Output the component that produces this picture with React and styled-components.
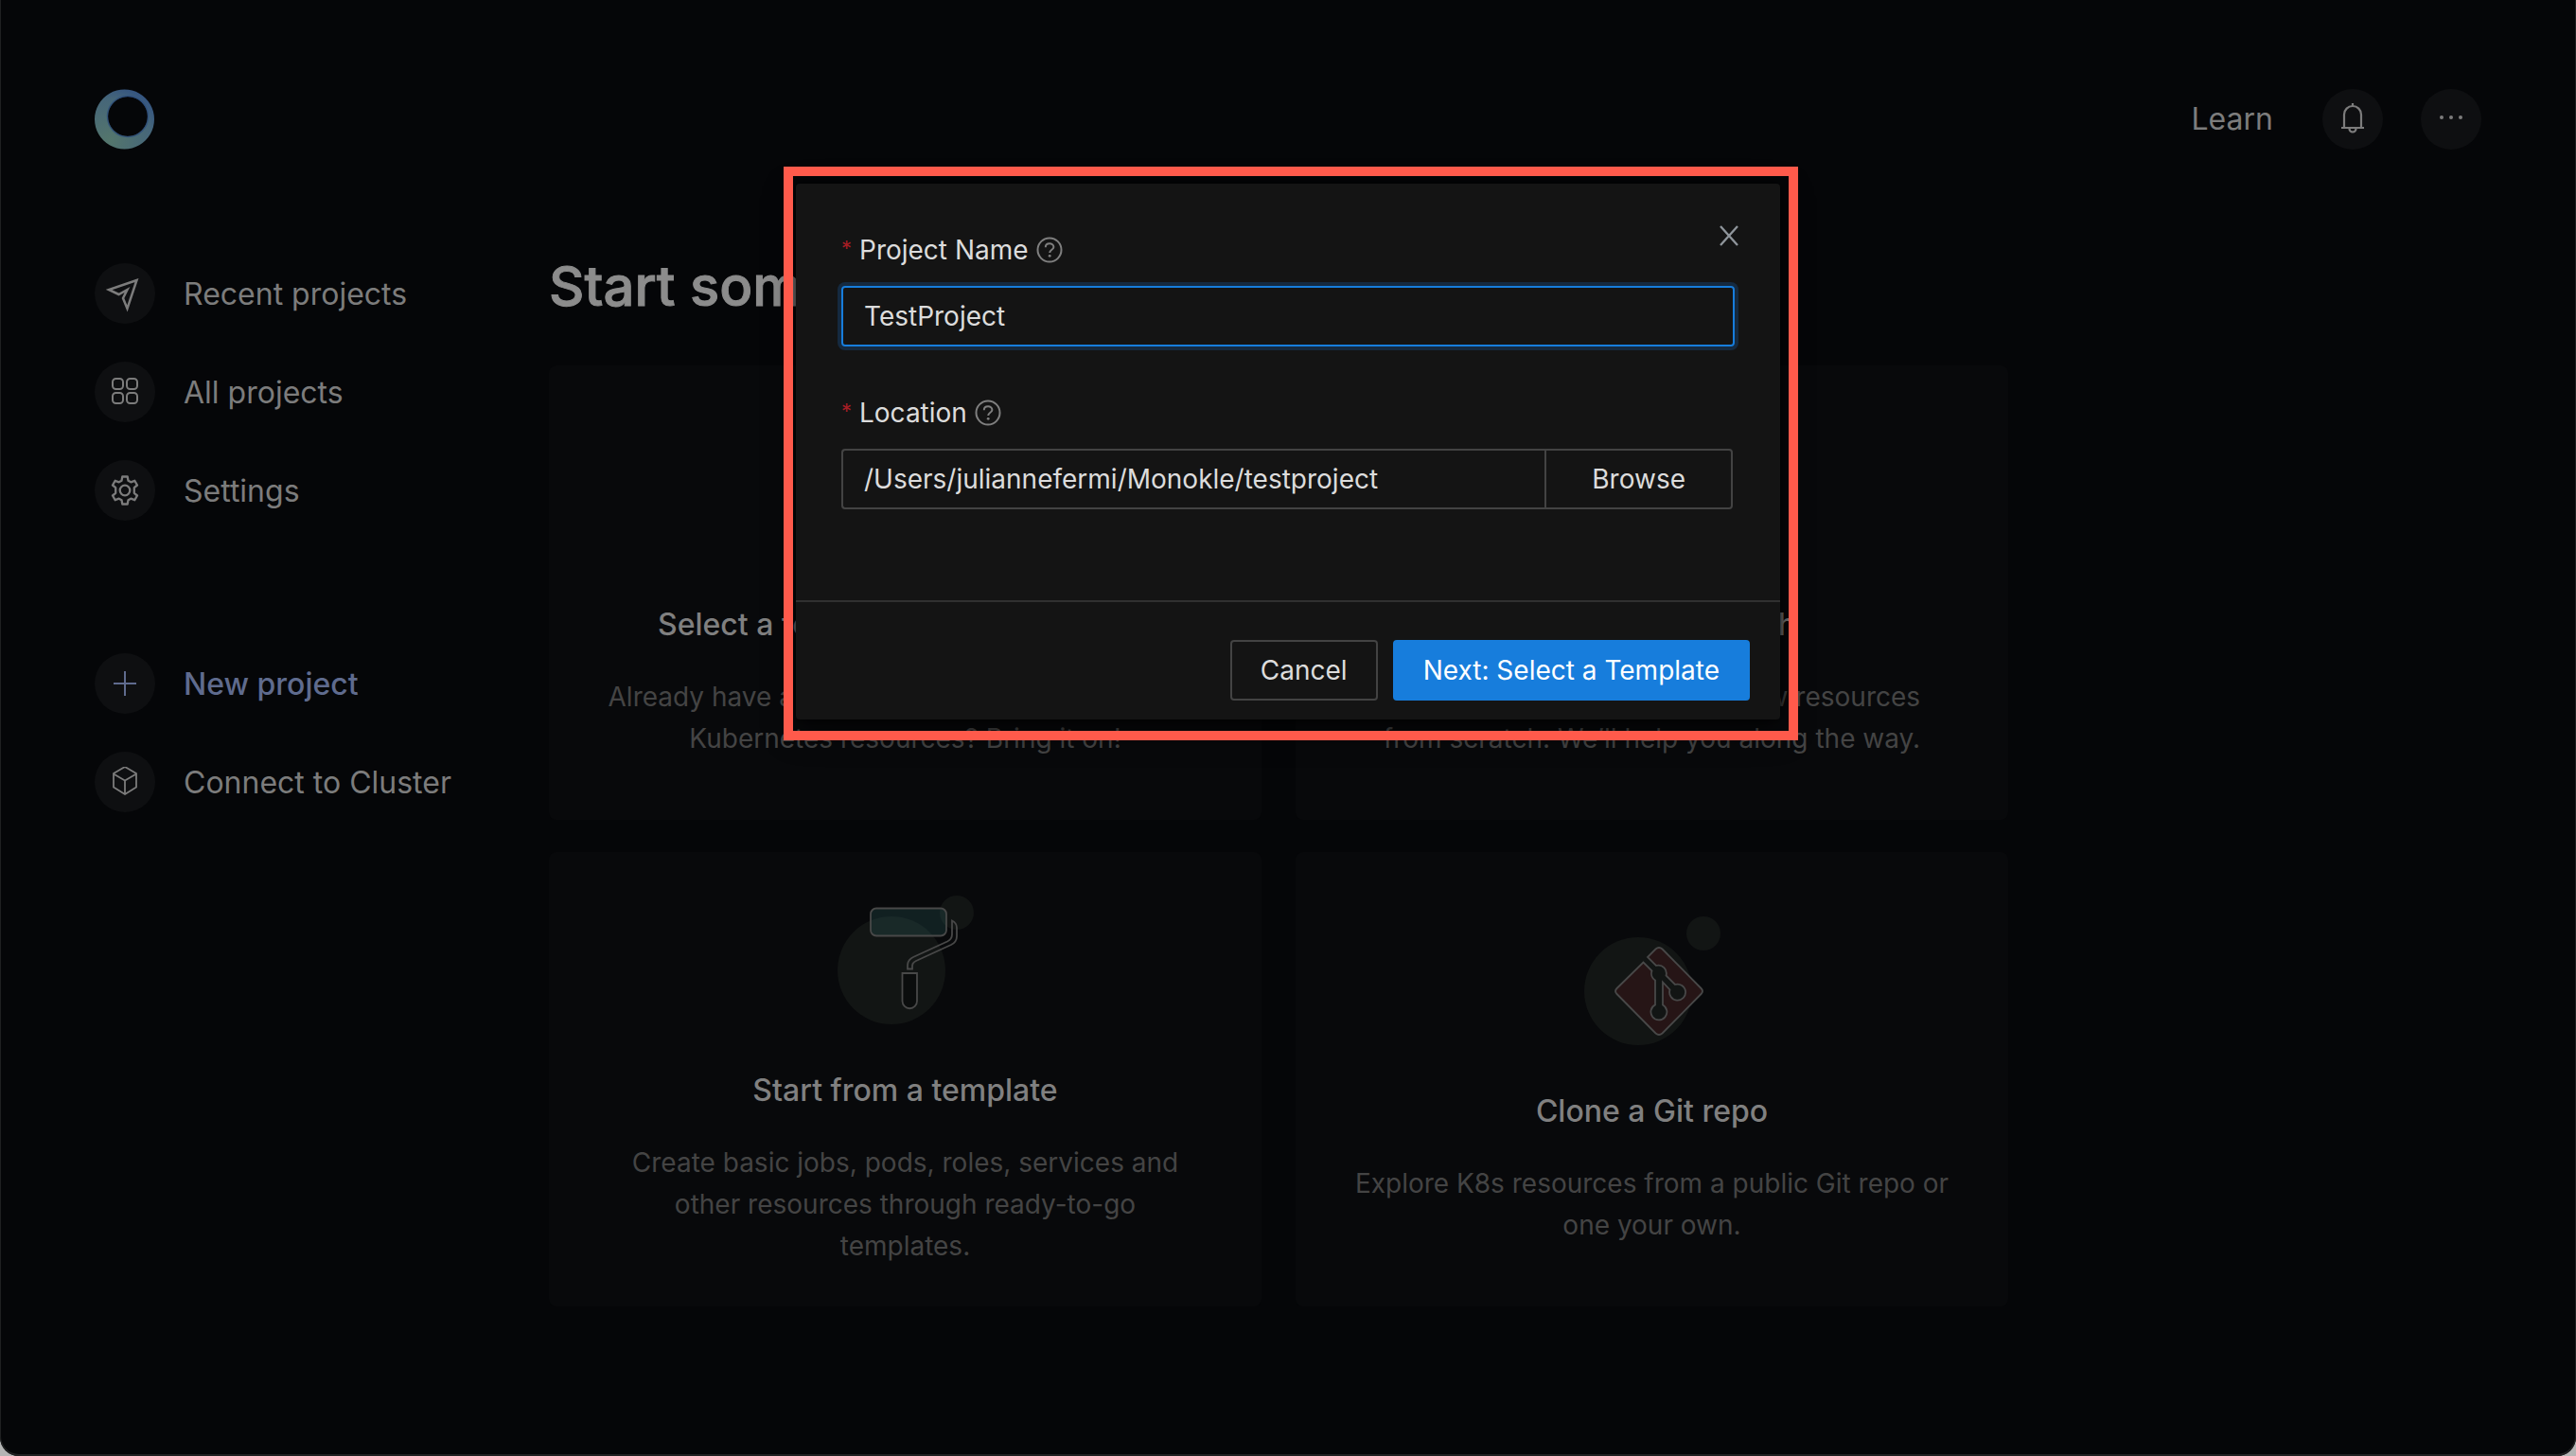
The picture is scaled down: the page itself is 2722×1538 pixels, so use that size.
import React from 'react';
import styled, { createGlobalStyle } from 'styled-components';

const GlobalStyle = createGlobalStyle`
  * { box-sizing: border-box; }
  html, body, #root { height: 100%; }
  body { margin: 0; background: #b4b4b4; }
  body, button, input { font-family: Inter, "Liberation Sans", sans-serif; }
`;

const Window = styled.div`
  position: relative;
  min-height: 100%;
  padding: 94px 100px 0;
  overflow: hidden;
  border-radius: 0 0 20px 20px;
  background: #050608;
  box-shadow: inset 0 -1px 0 1px #1f2021;
  color: #7c7c7c;
`;

const Header = styled.header`
  display: flex;
  align-items: center;
  justify-content: space-between;
  height: 64px;
`;

const HeaderActions = styled.div`
  display: flex;
  align-items: center;
  gap: 52px;
`;

const LearnLink = styled.a`
  font-size: 32px;
  line-height: 48px;
  color: #7c7c7c;
  text-decoration: none;
`;

const RoundButtons = styled.div`
  display: flex;
  gap: 40px;
`;

const RoundButton = styled.button`
  display: flex;
  align-items: center;
  justify-content: center;
  width: 64px;
  height: 64px;
  padding: 0;
  border: 0;
  border-radius: 50%;
  background: #0e0f11;
  color: #7c7c7c;
`;

const Body = styled.div`
  display: flex;
  padding-top: 108px;
`;

const Sidebar = styled.nav`
  display: flex;
  flex: 0 0 480px;
  flex-direction: column;
  gap: 140px;
  padding-top: 12px;
`;

const NavGroup = styled.div`
  display: flex;
  flex-direction: column;
  align-items: flex-start;
  gap: 40px;
`;

const NavItem = styled.a`
  display: flex;
  align-items: center;
  gap: 30px;
  height: 64px;
  font-size: 32px;
  font-weight: ${p => (p.$active ? 500 : 400)};
  color: ${p => (p.$active ? '#5f6b8e' : '#7c7c7c')};
  text-decoration: none;
`;

const NavIcon = styled.span`
  display: flex;
  align-items: center;
  justify-content: center;
  width: 64px;
  height: 64px;
  border-radius: 50%;
  background: #0e0f11;
`;

const Main = styled.main`
  flex: 0 1 1542px;
`;

const PageTitle = styled.h1`
  margin: 0 0 48px;
  font-size: 58px;
  font-weight: 500;
  line-height: 72px;
  color: #8c8c8c;
  -webkit-text-stroke: 1px #8c8c8c;
`;

const CardGrid = styled.div`
  display: grid;
  grid-template-columns: 1fr 1fr;
  grid-auto-rows: 1fr;
  gap: 34px 36px;
`;

const Card = styled.a`
  display: flex;
  flex-direction: column;
  align-items: center;
  justify-content: center;
  min-height: 480px;
  padding: 40px 56px 36px;
  border-radius: 8px;
  background: #08090b;
  text-align: center;
  text-decoration: none;
`;

const ArtSpace = styled.div`
  height: 136px;
`;

const CardTitle = styled.h2`
  margin: 48px 0 32px;
  font-size: 32px;
  font-weight: 500;
  line-height: 44px;
  color: #808080;
`;

const CardText = styled.p`
  max-width: 630px;
  margin: 0;
  font-size: 28px;
  line-height: 44px;
  color: #444444;
`;

const Highlight = styled.div`
  position: absolute;
  top: 176px;
  left: 50%;
  width: 1072px;
  margin-left: -533px;
  padding: 18px 19px 22px 13px;

  &::after {
    content: '';
    position: absolute;
    inset: 0;
    border: 10px solid #ff5a4b;
    pointer-events: none;
  }
`;

const Dialog = styled.div`
  position: relative;
  border-radius: 4px;
  background: #141414;
  box-shadow: 0 12px 32px rgba(0, 0, 0, 0.6), 0 0 12px rgba(0, 0, 0, 0.7);
`;

const CloseButton = styled.button`
  position: absolute;
  top: 23px;
  right: 22px;
  display: flex;
  align-items: center;
  justify-content: center;
  width: 64px;
  height: 64px;
  padding: 0;
  border: 0;
  background: none;
  color: #8f959b;
`;

const DialogBody = styled.div`
  display: flex;
  flex-direction: column;
  gap: 48px;
  padding: 48px 48px 96px;
`;

const Field = styled.div`
  display: flex;
  flex-direction: column;
  gap: 16px;
`;

const FieldHead = styled.div`
  display: flex;
  align-items: center;
  gap: 8px;
  height: 44px;
`;

const Label = styled.label`
  display: flex;
  align-items: center;
  gap: 8px;
  font-size: 28px;
  line-height: 44px;
  color: #dcdcdc;
`;

const Required = styled.span`
  align-self: flex-start;
  width: 11px;
  font-size: 22px;
  line-height: 40px;
  color: #a61d24;
`;

const TextInput = styled.input`
  width: 100%;
  min-width: 0;
  height: 64px;
  padding: 0 22px;
  border: 2px solid #434343;
  border-radius: 4px;
  outline: 0;
  background: transparent;
  font-size: 28px;
  color: #dcdcdc;
`;

const FocusedInput = styled(TextInput)`
  border-color: #177ddc;
  box-shadow: 0 0 0 4px #152a40;
`;

const InputGroup = styled.div`
  display: flex;
  padding-right: 2px;
`;

const PathInput = styled(TextInput)`
  flex: 1;
  border-right: 0;
  border-radius: 4px 0 0 4px;
`;

const Button = styled.button`
  height: 64px;
  padding: 0 30px;
  border: 2px solid ${p => (p.$primary ? '#177ddc' : '#434343')};
  border-radius: 4px;
  background: ${p => (p.$primary ? '#177ddc' : 'transparent')};
  font-size: 28px;
  color: ${p => (p.$primary ? '#ffffff' : '#dcdcdc')};
`;

const BrowseButton = styled(Button)`
  padding: 0 48px;
  border-radius: 0 4px 4px 0;
`;

const DialogFooter = styled.footer`
  display: flex;
  justify-content: flex-end;
  gap: 16px;
  padding: 40px 32px 20px;
  border-top: 2px solid #303030;
`;

const Logo = () => (
  <svg width="64" height="64" viewBox="0 0 64 64" role="img" aria-label="Monokle">
    <defs>
      <radialGradient id="logo-fill" gradientUnits="userSpaceOnUse" cx="16" cy="54" r="62">
        <stop offset="0" stopColor="#54766c" />
        <stop offset="0.7" stopColor="#466679" />
        <stop offset="1" stopColor="#305083" />
      </radialGradient>
    </defs>
    <path fill="url(#logo-fill)" fillRule="evenodd" d="M31.500 .5a31.500 31.500 0 1 0 .01 0zM35 8a21 21 0 1 1-.01 0z" />
    <circle cx="35" cy="29" r="21.500" fill="none" stroke="#2a4a7c" strokeOpacity="0.700" strokeWidth="1.500" />
  </svg>
);

const stroke = { fill: 'none', stroke: 'currentColor', strokeWidth: 2 };

const SendIcon = () => (
  <svg width="40" height="40" viewBox="0 0 40 40" {...stroke} strokeWidth="2.500">
    <path d="M32.500 6 3 16l10.500 5 9-5-4.500 9 4.500 11z" strokeLinejoin="miter" />
  </svg>
);

const GridIcon = () => (
  <svg width="32" height="32" viewBox="0 0 32 32" {...stroke}>
    {[[3, 2], [18, 2], [3, 17], [18, 17]].map(([x, y]) => (
      <rect key={`${x}-${y}`} x={x} y={y} width="11" height="11" rx="3.500" />
    ))}
  </svg>
);

const GearIcon = () => (
  <svg width="32" height="32" viewBox="0 0 32 32" {...stroke} strokeWidth="2.300" strokeLinejoin="round">
    <path d="M13.300 1.500h5.400l.8 4.200 2.800 1.600 4-1.500 2.700 4.700-3.200 2.700v5.600l3.200 2.700-2.700 4.700-4-1.500-2.800 1.600-.8 4.200h-5.400l-.8-4.200-2.800-1.600-4 1.500L3 21.500l3.200-2.700v-5.600L3 10.500l2.700-4.700 4 1.500 2.800-1.600z" />
    <circle cx="16" cy="16" r="5.300" />
  </svg>
);

const PlusIcon = () => (
  <svg width="32" height="32" viewBox="0 0 32 32" {...stroke}>
    <path d="M16 3v26M4 16h24" />
  </svg>
);

const CubeIcon = () => (
  <svg width="32" height="32" viewBox="0 0 32 32" {...stroke} strokeWidth="1.800" strokeLinejoin="round">
    <path d="M16 0 28 7v14.500L16 29 4 21.500V7zM4 7.500l12 7 12-7M16 14.500V29" />
  </svg>
);

const BellIcon = () => (
  <svg width="32" height="36" viewBox="0 0 32 36" {...stroke} strokeWidth="2.200">
    <path d="M16 1v3M7 27V13a9 9 0 0 1 18 0v14M4 27h24M12.500 28a3.500 3.500 0 0 0 7 0" />
  </svg>
);

const DotsIcon = () => (
  <svg width="32" height="32" viewBox="0 0 32 32" fill="currentColor">
    <circle cx="6" cy="14" r="2" />
    <circle cx="16" cy="14" r="2" />
    <circle cx="26" cy="14" r="2" />
  </svg>
);

const CloseIcon = () => (
  <svg width="24" height="24" viewBox="0 0 24 24" {...stroke} strokeWidth="2.300">
    <path d="M3 2l18 20M21 2 3 22" />
  </svg>
);

const HelpIcon = () => (
  <svg width="28" height="28" viewBox="0 0 28 28" {...stroke} stroke="#7f7f7f">
    <circle cx="14" cy="14" r="12.500" />
    <path d="M9.800 11.200c0-5.200 8.600-5 8.600-.3 0 2.900-4.200 2.800-4.200 6.100" />
    <circle cx="14.200" cy="20.300" r="1.400" fill="#7f7f7f" stroke="none" />
  </svg>
);

const RollerArt = () => (
  <svg width="144" height="136" viewBox="0 0 144 136" fill="none" stroke="#484848" strokeWidth="1.800">
    <circle cx="126" cy="18" r="18" fill="#121514" stroke="none" />
    <circle cx="57" cy="79" r="57" fill="#121514" stroke="none" />
    <rect x="35" y="13.500" width="80" height="29" rx="6" fill="#2a5c5c" fillOpacity="0.280" />
    <path d="M121 26.500V41q0 5-5 7.500L80 65q-6 3-6 9v3.500h5V74q0-3 4-5l37-17q6-3 6-9V34q0-5-5-7.500z" />
    <path d="M68.500 82h15.500v29.500a7.700 7.700 0 0 1-15.500 0z" fill="#0b0d0d" />
  </svg>
);

const GitArt = () => (
  <svg width="144" height="136" viewBox="0 0 144 136" fill="none" stroke="#484848" strokeWidth="1.800">
    <circle cx="126" cy="18" r="18" fill="#121514" stroke="none" />
    <circle cx="57" cy="79" r="57" fill="#121514" stroke="none" />
    <path
      fill="#261516"
      d="M62.500 48.500 34.500 76q-3 3 0 6l41 41.500q3.500 3 7 0l41-41.500q3-3 0-6l-41-41.500q-3.500-3-7 0l-8.500 8.500 9 9a8.500 8.500 0 0 1 10.500 10.500l9.500 9.500a8.500 8.500 0 1 1-5.500 5.500L83 69.500v24a8.500 8.500 0 1 1-8-.1V67.500a8.500 8.500 0 0 1-3.500-10z"
    />
  </svg>
);

const CARDS = [
  {
    title: 'Select a folder with K8s resources',
    text: 'Already have a local folder with several existing Kubernetes resources? Bring it on!',
  },
  {
    title: 'Create from scratch',
    text: 'Create an empty project for new resources from scratch. We’ll help you along the way.',
  },
  {
    title: 'Start from a template',
    text: 'Create basic jobs, pods, roles, services and other resources through ready-to-go templates.',
    Art: RollerArt,
  },
  {
    title: 'Clone a Git repo',
    text: 'Explore K8s resources from a public Git repo or one your own.',
    Art: GitArt,
  },
];

const NAV = [
  [
    { label: 'Recent projects', Icon: SendIcon },
    { label: 'All projects', Icon: GridIcon },
    { label: 'Settings', Icon: GearIcon },
  ],
  [
    { label: 'New project', Icon: PlusIcon, active: true },
    { label: 'Connect to Cluster', Icon: CubeIcon },
  ],
];

export default function App() {
  return (
    <>
      <GlobalStyle />
      <Window>
        <Header>
          <Logo />
          <HeaderActions>
            <LearnLink href="#learn">Learn</LearnLink>
            <RoundButtons>
              <RoundButton aria-label="Notifications"><BellIcon /></RoundButton>
              <RoundButton aria-label="More"><DotsIcon /></RoundButton>
            </RoundButtons>
          </HeaderActions>
        </Header>
        <Body>
          <Sidebar>
            {NAV.map((group, i) => (
              <NavGroup key={i}>
                {group.map(({ label, Icon, active }) => (
                  <NavItem key={label} href="#nav" $active={active}>
                    <NavIcon><Icon /></NavIcon>
                    {label}
                  </NavItem>
                ))}
              </NavGroup>
            ))}
          </Sidebar>
          <Main>
            <PageTitle>Start something new</PageTitle>
            <CardGrid>
              {CARDS.map(({ title, text, Art }) => (
                <Card key={title} href="#card">
                  <ArtSpace>{Art && <Art />}</ArtSpace>
                  <CardTitle>{title}</CardTitle>
                  <CardText>{text}</CardText>
                </Card>
              ))}
            </CardGrid>
          </Main>
        </Body>
        <Highlight>
          <Dialog role="dialog" aria-label="New project">
            <CloseButton aria-label="Close"><CloseIcon /></CloseButton>
            <DialogBody>
              <Field>
                <FieldHead>
                  <Label htmlFor="project-name"><Required>*</Required>Project Name</Label>
                  <HelpIcon />
                </FieldHead>
                <FocusedInput id="project-name" defaultValue="TestProject" />
              </Field>
              <Field>
                <FieldHead>
                  <Label htmlFor="location"><Required>*</Required>Location</Label>
                  <HelpIcon />
                </FieldHead>
                <InputGroup>
                  <PathInput id="location" defaultValue="/Users/juliannefermi/Monokle/testproject" />
                  <BrowseButton>Browse</BrowseButton>
                </InputGroup>
              </Field>
            </DialogBody>
            <DialogFooter>
              <Button>Cancel</Button>
              <Button $primary>Next: Select a Template</Button>
            </DialogFooter>
          </Dialog>
        </Highlight>
      </Window>
    </>
  );
}
